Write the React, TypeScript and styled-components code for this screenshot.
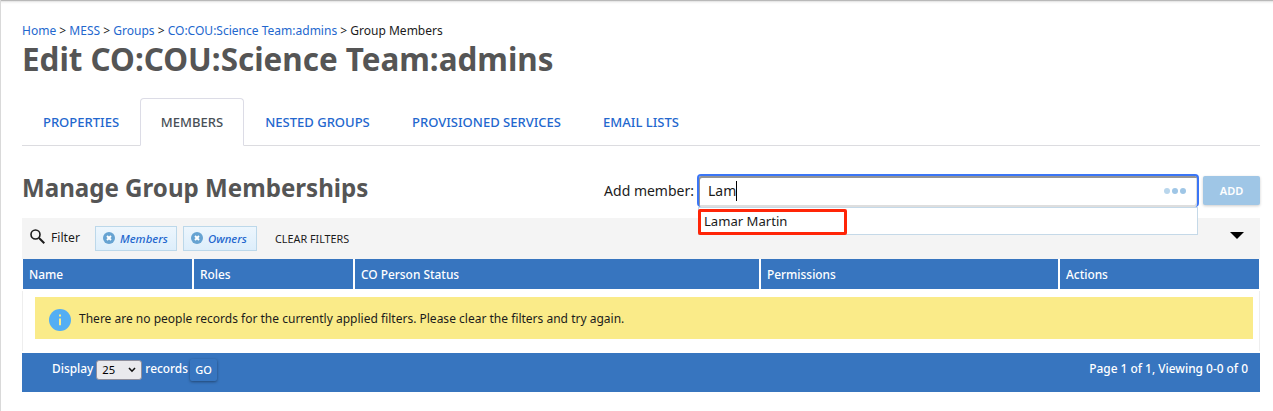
import React from "react";
import styled, { createGlobalStyle } from "styled-components";

const GlobalStyle = createGlobalStyle`
  * { box-sizing: border-box; }
  body {
    margin: 0;
    background: #fff;
    color: #1b1b1b;
    font: 12px/18px "Noto Sans", "Open Sans", sans-serif;
  }
  button, input, select { font-family: inherit; }
`;

const Page = styled.main`
  height: 411px;
  padding: 20px 13px 0 21px;
  border-left: 1px solid #d9d9d9;
  overflow: hidden;
  background: linear-gradient(#b9b9b9 0, #b9b9b9 1px, #dcdcdc 1px, #f3f3f3 2px, #fff 4px);
`;

const Breadcrumbs = styled.nav`
  height: 22px;
  font-size: 12.02px;
  line-height: 22px;
  white-space: nowrap;
`;

const Link = styled.a`
  color: #2367ce;
  text-decoration: none;
`;

const Title = styled.h1`
  margin: 0;
  height: 34px;
  font-size: 31.4px;
  line-height: 33px;
  font-weight: 700;
  color: #555;
  white-space: nowrap;
`;

const Tabs = styled.nav`
  display: flex;
  height: 48px;
  margin-top: 22px;
  border-bottom: 1px solid #dcdce0;
`;

const Tab = styled.a<{ $width: number; $active?: boolean }>`
  width: ${(p) => p.$width}px;
  height: 48px;
  text-align: center;
  font-size: 13.03px;
  line-height: 47px;
  white-space: nowrap;
  color: ${(p) => (p.$active ? "#495057" : "#2367ce")};
  font-weight: 500;
  border: 1px solid ${(p) => (p.$active ? "#dcdce6" : "transparent")};
  border-bottom-color: ${(p) => (p.$active ? "#fff" : "transparent")};
  border-radius: 4px 4px 0 0;
  background: ${(p) => (p.$active ? "#fff" : "none")};
`;

const Heading = styled.div`
  display: flex;
  align-items: flex-start;
  height: 72px;
  padding-top: 29px;
`;

const Subtitle = styled.h2`
  margin: 0;
  flex: 1;
  font-size: 24.1px;
  line-height: 26px;
  font-weight: 700;
  color: #555;
  white-space: nowrap;
`;

const MemberLabel = styled.label`
  margin-right: 3px;
  font-size: 14px;
  line-height: 32px;
  white-space: nowrap;
`;

const Combo = styled.div`
  position: relative;
  width: 502px;
  height: 33px;
  margin-top: -1px;
`;

const Field = styled.div`
  display: flex;
  align-items: center;
  height: 33px;
  padding: 0 11px 1px 9px;
  border: 2px solid #3b76f6;
  border-bottom: 0;
  border-radius: 4px;
  background: #fff;
  box-shadow: inset 1px 2px 0 #949494, inset -1px -2px 0 #dedede;
  font-size: 14px;
`;

const Caret = styled.span`
  width: 1px;
  height: 20px;
  background: #000;
`;

const Dots = styled.span`
  display: flex;
  gap: 2px;
  margin-left: auto;
`;

const Dot = styled.i<{ $color: string }>`
  width: 6px;
  height: 6px;
  border-radius: 50%;
  background: ${(p) => p.$color};
`;

const Menu = styled.div`
  position: absolute;
  z-index: 1;
  top: 33px;
  left: 1px;
  width: 500px;
  height: 28px;
  border: 1px solid #c5d9e8;
  background: #fff;
`;

const Suggestion = styled.div`
  width: 149px;
  height: 26px;
  margin: 1px 0 0 -1px;
  padding-left: 3px;
  border: 3px solid #ff2507;
  border-radius: 2px;
  font-size: 13.1px;
  line-height: 18px;
  white-space: nowrap;
`;

const AddButton = styled.button`
  width: 57px;
  height: 29px;
  margin: 1px 0 0 4px;
  padding: 0;
  border: 0;
  border-radius: 2px;
  background: #9fc6e6;
  color: #fff;
  font-size: 11px;
  font-weight: 600;
  box-shadow: 0 1px 3px rgba(0, 0, 0, 0.2);
`;

const FilterBar = styled.section`
  display: flex;
  align-items: flex-start;
  height: 41px;
  padding: 8px 16px 0 8px;
  background: #f4f4f4;
`;

const FilterLabel = styled.span`
  display: flex;
  gap: 5px;
  width: 65px;
  font-size: 12.2px;
  line-height: 23px;
  white-space: nowrap;
`;

const Chip = styled.span<{ $width: number }>`
  display: flex;
  align-items: center;
  gap: 5px;
  width: ${(p) => p.$width}px;
  height: 25px;
  margin-right: 6px;
  padding: 0 0 1px 7px;
  border: 1px solid #bcd8ea;
  background: linear-gradient(#edf6fd, #ddeefb);
  color: #2367ce;
  font-size: 11.4px;
  font-style: italic;
  font-weight: 500;
`;

const ChipText = styled.span`
  padding-top: 2px;
`;

const ClearFilters = styled.span`
  margin-left: 12px;
  font-size: 10.8px;
  line-height: 26px;
  white-space: nowrap;
`;

const Arrow = styled.span`
  margin: 6px 0 0 auto;
  border: 7px solid transparent;
  border-top-color: #000;
  border-bottom: 0;
`;

const HeaderRow = styled.div`
  display: grid;
  grid-template-columns: 169px 159px 404px 297px 1fr;
  gap: 2px;
  margin: 0 1px;
  height: 30px;
`;

const HeaderCell = styled.div`
  height: 30px;
  padding-left: 6px;
  background: #3775bf;
  color: #fff;
  font-size: 11.9px;
  font-weight: 500;
  line-height: 31px;
`;

const TableBody = styled.div`
  height: 60px;
  margin: 2px 0;
  padding: 6px 6px 0 12px;
  border: solid #eee;
  border-width: 0 1px;
`;

const Notice = styled.div`
  display: flex;
  align-items: center;
  gap: 8px;
  height: 42px;
  padding-left: 14px;
  background: #faeb89;
  font-size: 12.02px;
  white-space: nowrap;
`;

const NoticeText = styled.span`
  padding-top: 2px;
`;

const NoticeIcon = styled.svg`
  margin-top: 4px;
`;

const Footer = styled.footer`
  display: flex;
  height: 39px;
  padding: 7px 12px 0 30px;
  background: #3775bf;
  color: #fff;
  font-size: 11.9px;
  line-height: 17px;
  font-weight: 500;
  white-space: nowrap;
`;

const Select = styled.span`
  display: flex;
  align-items: center;
  justify-content: space-between;
  width: 46px;
  height: 20px;
  margin: 0 3px;
  padding: 0 5px;
  border: 1px solid #8f8f9d;
  border-radius: 3px;
  background: #e9e9ed;
  color: #000;
  font-size: 11.2px;
  line-height: 18px;
  font-weight: 400;
`;

const GoButton = styled.button`
  width: 27px;
  height: 22px;
  margin: -1px 0 0 2px;
  padding: 0 0 2px;
  border: 0;
  border-radius: 2px;
  background: #3775bf;
  color: #fff;
  font-size: 11px;
  font-weight: 500;
  box-shadow: 0 1px 3px rgba(0, 0, 0, 0.4);
`;

const PageInfo = styled.span`
  margin-left: auto;
`;

const tabs = [
  { label: "PROPERTIES", width: 118 },
  { label: "MEMBERS", width: 104, active: true },
  { label: "NESTED GROUPS", width: 147 },
  { label: "PROVISIONED SERVICES", width: 191 },
  { label: "EMAIL LISTS", width: 118 },
];

const ClearIcon = () => (
  <svg width="12" height="12" viewBox="0 0 12 12">
    <circle cx="6" cy="6" r="6" fill="#66a3d2" />
    <path d="m4 4 4 4m0-4-4 4" stroke="#fff" strokeWidth="1.9" />
  </svg>
);

export default function App() {
  return (
    <Page>
      <GlobalStyle />
      <Breadcrumbs>
        <Link>Home</Link> &gt; <Link>MESS</Link> &gt; <Link>Groups</Link> &gt;{" "}
        <Link>CO:COU:Science Team:admins</Link> &gt; Group Members
      </Breadcrumbs>
      <Title>Edit CO:COU:Science Team:admins</Title>
      <Tabs>
        {tabs.map((t) => (
          <Tab key={t.label} $width={t.width} $active={t.active}>{t.label}</Tab>
        ))}
      </Tabs>
      <Heading>
        <Subtitle>Manage Group Memberships</Subtitle>
        <MemberLabel>Add member:</MemberLabel>
        <Combo>
          <Field>
            Lam
            <Caret />
            <Dots>
              <Dot $color="#b9d6ec" />
              <Dot $color="#9fc6e6" />
              <Dot $color="#9fc6e6" />
            </Dots>
          </Field>
          <Menu>
            <Suggestion>Lamar Martin</Suggestion>
          </Menu>
        </Combo>
        <AddButton>ADD</AddButton>
      </Heading>
      <FilterBar>
        <FilterLabel>
          <svg width="16" height="21" viewBox="0 0 16 21" fill="none" stroke="#1b1b1b">
            <circle cx="5.5" cy="8.5" r="4.5" strokeWidth="1.6" />
            <path d="m9 12 5.3 5.3" strokeWidth="2" />
          </svg>
          Filter
        </FilterLabel>
        <Chip $width={82}><ClearIcon /><ChipText>Members</ChipText></Chip>
        <Chip $width={74}><ClearIcon /><ChipText>Owners</ChipText></Chip>
        <ClearFilters>CLEAR FILTERS</ClearFilters>
        <Arrow />
      </FilterBar>
      <HeaderRow>
        {["Name", "Roles", "CO Person Status", "Permissions", "Actions"].map((h) => (
          <HeaderCell key={h}>{h}</HeaderCell>
        ))}
      </HeaderRow>
      <TableBody>
        <Notice>
          <NoticeIcon width="22" height="22" viewBox="0 0 22 22">
            <circle cx="11" cy="11" r="11" fill="#53aef3" />
            <path d="M10 5.4h2v2.2h-2zM10 9.6h2v6.6h-2z" fill="#faeb89" />
          </NoticeIcon>
          <NoticeText>
            There are no people records for the currently applied filters. Please clear the filters and try again.
          </NoticeText>
        </Notice>
      </TableBody>
      <Footer>
        Display
        <Select>
          25
          <svg width="8" height="6" viewBox="0 0 8 6" fill="none" stroke="#111" strokeWidth="1.6">
            <path d="m1 1 3 3.2L7 1" />
          </svg>
        </Select>
        records
        <GoButton>GO</GoButton>
        <PageInfo>Page 1 of 1, Viewing 0-0 of 0</PageInfo>
      </Footer>
    </Page>
  );
}
